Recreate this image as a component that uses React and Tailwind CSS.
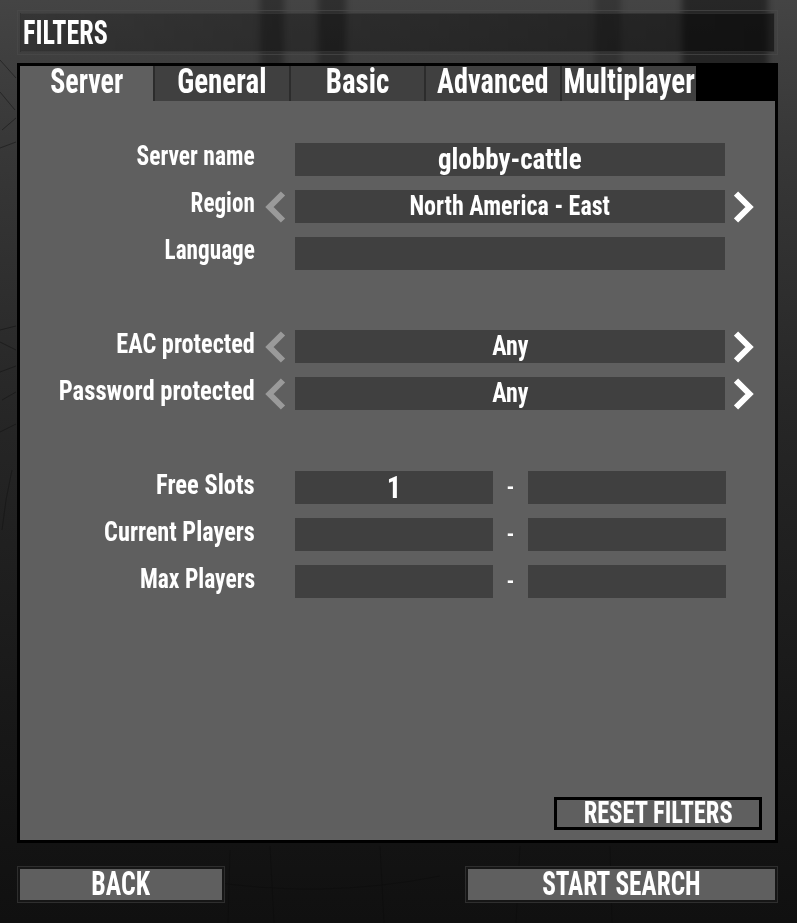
const labelFont = "font-['Roboto_Condensed','Roboto','Liberation_Sans',sans-serif]";

function Narrow({ children, className = '' }) {
  return <span className={`inline-block whitespace-nowrap font-bold text-white ${labelFont} ${className}`}>{children}</span>;
}

function Chevron({ dir, className = '' }) {
  return (
    <svg width="22" height="32" viewBox="0 0 22 32" className={className}>
      <path d={dir === 'left' ? 'M18 2.5 L4.5 16 L18 29.5' : 'M2 2.5 L15.5 16 L2 29.5'} fill="none" stroke="currentColor" strokeWidth="6" />
    </svg>
  );
}

// forest backdrop, only a drawing behind the panels
function Backdrop() {
  return (
    <svg width="797" height="923" viewBox="0 0 797 923" className="absolute left-0 top-0">
      <defs>
        <linearGradient id="bg" x1="0" y1="0" x2="0" y2="1">
          <stop offset="0" stopColor="#444" />
          <stop offset="0.15" stopColor="#383838" />
          <stop offset="0.45" stopColor="#262626" />
          <stop offset="0.8" stopColor="#171717" />
          <stop offset="1" stopColor="#101010" />
        </linearGradient>
        <filter id="soft" x="-50%" width="200%"><feGaussianBlur stdDeviation="3" /></filter>
      </defs>
      <rect width="797" height="923" fill="url(#bg)" />
      <g fill="#000" filter="url(#soft)">
        <rect x="260" y="-20" width="24" height="120" opacity="0.28" />
        <rect x="318" y="-20" width="28" height="120" opacity="0.3" />
        <rect x="595" y="-20" width="26" height="120" opacity="0.2" />
        <rect x="682" y="-20" width="86" height="120" opacity="0.42" />
      </g>
      <g fill="none" stroke="#111" strokeOpacity="0.5">
        <path d="M0 60 L16 78 M0 92 L15 110 M2 130 L16 118 M0 148 L16 142" />
        <path d="M0 330 L16 326 M0 342 L16 350 M0 372 L16 366 M2 400 L16 392 M0 432 L16 424" />
        <path d="M12 470 L6 500 L2 530" />
      </g>
      <g fill="none" stroke="#000" strokeOpacity="0.18">
        <path d="M230 850 L228 923 M270 846 L274 923 M380 846 L384 923 M520 846 L516 923 M610 846 L612 923 M200 880 Q320 900 440 876" />
      </g>
    </svg>
  );
}

function Label({ children, fit, high }) {
  return (
    <div className={`w-[235px] text-right ${high ? 'pb-[8px]' : 'pb-[6px]'}`}>
      <Narrow className={`origin-right text-[28px] leading-[33px] ${fit}`}>{children}</Narrow>
    </div>
  );
}

function Row({ label, fit, value, arrows, big, high }) {
  return (
    <div className="flex h-[33px] items-center">
      <Label fit={fit} high={high}>{label}</Label>
      <div className="flex w-[40px] justify-center pl-[2px]">
        {arrows && <Chevron dir="left" className="text-[#9a9a9a]" />}
      </div>
      <div className={`flex h-[33px] w-[430px] items-center justify-center bg-[#404040] ${big ? 'pb-[2px]' : ''}`}>
        <Narrow className={big ? 'scale-x-90 text-[30px]' : 'scale-x-[.89] text-[27px]'}>{value}</Narrow>
      </div>
      {arrows && <Chevron dir="right" className="ml-[9px] text-white" />}
    </div>
  );
}

function RangeRow({ label, fit, from }) {
  return (
    <div className="flex h-[33px] items-center">
      <Label fit={fit}>{label}</Label>
      <div className="ml-[40px] flex h-[33px] w-[198px] items-center justify-center bg-[#404040] pb-[2px]">
        <Narrow className="scale-x-90 text-[32px]">{from}</Narrow>
      </div>
      <div className="flex w-[35px] justify-center">
        <Narrow className="text-[22px]">-</Narrow>
      </div>
      <div className="h-[33px] w-[198px] bg-[#404040]" />
    </div>
  );
}

const tabs = [
  ['Server', 'w-[133px]', 'scale-x-[.8]'],
  ['General', 'w-[136px]', 'scale-x-[.83]'],
  ['Basic', 'w-[135px]', 'scale-x-[.825]'],
  ['Advanced', 'w-[136px]', 'scale-x-[.81]'],
  ['Multiplayer', 'w-[136px]', 'scale-x-[.83]'],
];

export default function App() {
  return (
    <div className="relative h-[923px] w-[797px] overflow-hidden bg-[#1c1c1c]">
      <Backdrop />
      <div className="relative flex h-full flex-col px-[17px] pt-[10px]">
        {/* Title */}
        <div className="h-[45px] w-[761px] border border-[#4a4a4a]/70 p-[2px]">
          <div className="flex h-full items-center border border-[#4a4a4a]/40 bg-linear-to-r from-black/20 to-black/50 px-[2px]">
            <Narrow className="origin-left text-[33px] scale-x-[.79]">FILTERS</Narrow>
          </div>
        </div>

        {/* Panel */}
        <div className="mt-[8px] flex h-[780px] w-[761px] flex-col border-[3px] border-black bg-[#5f5f5f]">
          <div className="flex h-[35px] bg-black">
            {tabs.map(([name, width, fit], i) => (
              <div
                key={name}
                className={`flex items-center justify-center pb-[4px] ${width} ${i === 0 ? 'bg-[#5f5f5f]' : 'border-l-2 border-[#2c2c2c] bg-[#404040]'}`}
              >
                <Narrow className={`text-[35px] leading-[35px] ${fit}`}>{name}</Narrow>
              </div>
            ))}
          </div>

          <div className="relative flex flex-1 flex-col pt-[42px]">
            <div className="flex flex-col gap-[14px]">
              <Row label="Server name" fit="scale-x-[.84]" value="globby-cattle" big high />
              <Row label="Region" fit="scale-x-[.825]" value="North America - East" arrows high />
              <Row label="Language" fit="scale-x-[.83]" high />
            </div>
            <div className="mt-[60px] flex flex-col gap-[14px]">
              <Row label="EAC protected" fit="scale-x-[.867]" value="Any" arrows />
              <Row label="Password protected" fit="scale-x-[.88]" value="Any" arrows />
            </div>
            <div className="mt-[61px] flex flex-col gap-[14px]">
              <RangeRow label="Free Slots" fit="scale-x-[.875]" from="1" />
              <RangeRow label="Current Players" fit="scale-x-[.867]" />
              <RangeRow label="Max Players" fit="scale-x-[.84]" />
            </div>
            <div className="absolute bottom-[10px] right-[13px] flex h-[33px] w-[208px] items-center justify-center border-[3px] border-black">
              <Narrow className="text-[31px] scale-x-[.79]">RESET FILTERS</Narrow>
            </div>
          </div>
        </div>

        {/* Bottom buttons */}
        <div className="ml-[1px] mt-[24px] flex w-[759px] justify-between">
          <div className="flex h-[35px] w-[206px] items-center justify-center border-2 border-[#161616] bg-[#5f5f5f] pb-[3px] outline outline-[#2e2e2e]">
            <Narrow className="text-[34px] scale-x-[.76]">BACK</Narrow>
          </div>
          <div className="flex h-[35px] w-[311px] items-center justify-center border-2 border-[#161616] bg-[#5f5f5f] pb-[3px] outline outline-[#2e2e2e]">
            <Narrow className="text-[34px] scale-x-[.745]">START SEARCH</Narrow>
          </div>
        </div>
      </div>
    </div>
  );
}
